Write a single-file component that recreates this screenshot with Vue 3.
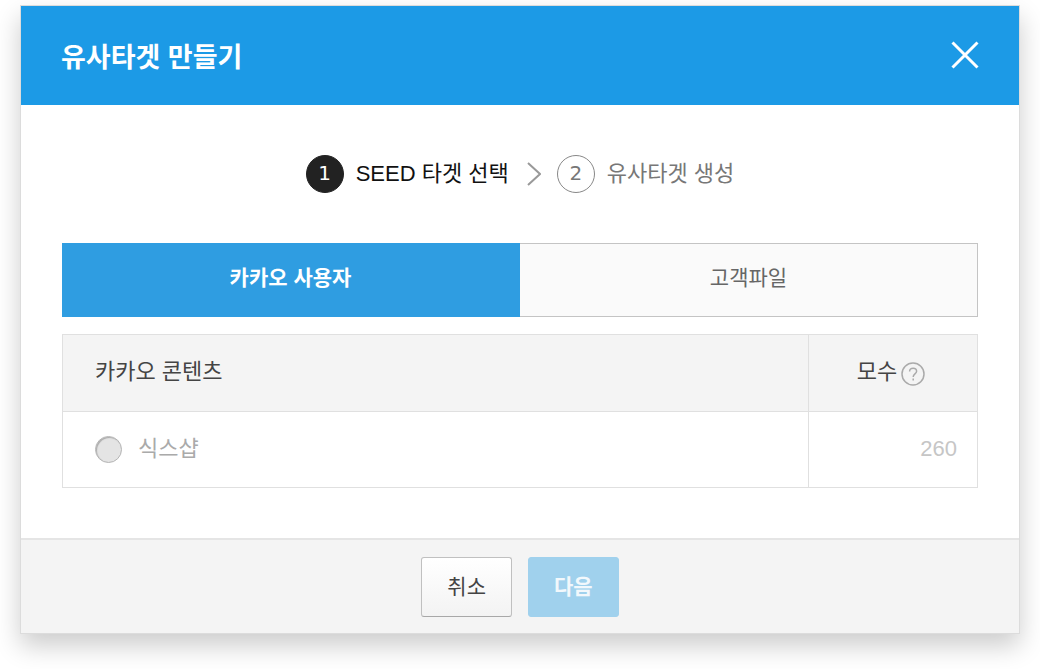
<script setup>
import { ref } from 'vue'

const steps = [
  { no: 1, label: 'SEED 타겟 선택' },
  { no: 2, label: '유사타겟 생성' },
]
const currentStep = ref(1)

const tabs = [
  { id: 'kakao', label: '카카오 사용자' },
  { id: 'file', label: '고객파일' },
]
const activeTab = ref('kakao')

const contents = [{ id: 'sixshop', name: '식스샵', count: 260, disabled: true }]
const selected = ref('')
</script>

<template>
  <section class="modal" role="dialog" aria-labelledby="modal-title">
    <header class="modal-header">
      <h1 id="modal-title" class="modal-title">유사타겟 만들기</h1>
      <button class="close" type="button" aria-label="닫기">
        <svg viewBox="0 0 28 28" width="28" height="28" aria-hidden="true">
          <path d="M1.5 1.5 26.5 26.5M26.5 1.5 1.5 26.5" />
        </svg>
      </button>
    </header>

    <div class="modal-body">
      <ol class="steps">
        <li
          v-for="(step, index) in steps"
          :key="step.no"
          class="step"
          :class="{ 'is-current': step.no === currentStep }"
        >
          <svg v-if="index > 0" class="step-arrow" viewBox="0 0 14 24" width="14" height="24" aria-hidden="true">
            <path d="M1 1 13 12 1 23" />
          </svg>
          <span class="step-no">{{ step.no }}</span>
          <span>{{ step.label }}</span>
        </li>
      </ol>

      <div class="tabs" role="tablist">
        <button
          v-for="tab in tabs"
          :key="tab.id"
          class="tab"
          :class="{ 'is-active': tab.id === activeTab }"
          type="button"
          role="tab"
          :aria-selected="String(tab.id === activeTab)"
          @click="activeTab = tab.id"
        >
          {{ tab.label }}
        </button>
      </div>

      <table class="targets">
        <thead>
          <tr>
            <th class="name" scope="col">카카오 콘텐츠</th>
            <th class="count" scope="col">
              <div class="count-head">
                <span>모수</span>
                <button class="help" type="button" aria-label="도움말">
                  <svg viewBox="0 0 24 24" width="24" height="24" aria-hidden="true">
                    <circle cx="12" cy="12" r="11" />
                    <path d="M8.6 9.6C8.6 7.4 10 6.2 12.1 6.2s3.5 1.2 3.5 3.1c0 2.6-3.4 2.7-3.4 5.6" />
                    <path d="M12.2 16.6v1.8" />
                  </svg>
                </button>
              </div>
            </th>
          </tr>
        </thead>
        <tbody>
          <tr v-for="item in contents" :key="item.id" :class="{ 'is-disabled': item.disabled }">
            <td class="name">
              <label class="choice">
                <input v-model="selected" type="radio" name="content" :value="item.id" :disabled="item.disabled" />
                <span>{{ item.name }}</span>
              </label>
            </td>
            <td class="count">{{ item.count }}</td>
          </tr>
        </tbody>
      </table>
    </div>

    <footer class="modal-footer">
      <button class="btn" type="button">취소</button>
      <button class="btn btn-primary" type="button" :disabled="!selected">다음</button>
    </footer>
  </section>
</template>

<style>
body {
  background: #fff;
}
</style>

<style scoped>
.modal {
  margin: 5px 20px 36px;
  border: 1px solid #dcdcdc;
  background: #fff;
  box-shadow: 0 12px 24px rgba(0, 0, 0, 0.2);
  font-family: 'Liberation Sans', 'Noto Sans CJK KR', sans-serif;
  font-size: 22px;
  line-height: 32px;
  color: #444;
}

button {
  font-family: inherit;
  cursor: pointer;
}

button:disabled {
  cursor: default;
}

.modal-header {
  display: flex;
  align-items: flex-start;
  justify-content: space-between;
  padding: 32px 40px 27px;
  background: #1c9ae6;
}

.modal-title {
  margin: 0;
  font-size: 27px;
  line-height: 40px;
  font-weight: 700;
  color: #fff;
}

.close {
  display: flex;
  margin-top: 3px;
  padding: 0;
  border: 0;
  background: none;
}

.close path {
  fill: none;
  stroke: #fff;
  stroke-width: 3;
}

.modal-body {
  padding: 50px 41px;
}

.steps {
  display: flex;
  justify-content: center;
  gap: 18px;
  margin: 0 0 50px;
  padding: 0;
  list-style: none;
}

.step {
  display: flex;
  align-items: center;
  gap: 12px;
  color: #777;
}

.step.is-current {
  color: #111;
}

.step-arrow {
  margin-right: 4px;
}

.step-arrow path {
  fill: none;
  stroke: #999;
  stroke-width: 2;
}

.step-no {
  box-sizing: border-box;
  width: 38px;
  height: 38px;
  border: 1px solid #888;
  border-radius: 50%;
  font-family: 'DejaVu Sans', sans-serif;
  font-size: 20px;
  line-height: 34px;
  text-align: center;
}

.is-current .step-no {
  border-color: #222;
  background: #222;
  color: #fff;
}

.tabs {
  display: flex;
  margin-bottom: 17px;
}

.tab {
  flex: 1;
  padding: 18px 0 22px;
  border: 1px solid #c4c4c4;
  border-left: 0;
  background: #fafafa;
  font-size: 21px;
  line-height: 32px;
  color: #666;
}

.tab.is-active {
  border-color: #2f9de1;
  background: #2f9de1;
  font-weight: 700;
  color: #fff;
}

.targets {
  width: 100%;
  border-collapse: collapse;
}

.targets th,
.targets td {
  border: 1px solid #e0e0e0;
  padding: 21px 20px 23px 32px;
  font-weight: 400;
  text-align: left;
}

.targets td {
  padding-bottom: 22px;
}

.targets .count {
  box-sizing: border-box;
  width: 169px;
  padding-left: 16px;
  text-align: right;
}

.targets th {
  background: #f4f4f4;
}

.count-head {
  display: flex;
  align-items: center;
  justify-content: center;
  gap: 4px;
}

.help {
  display: flex;
  padding: 4px 0 0;
  border: 0;
  background: none;
}

.help svg {
  fill: none;
  stroke: #aaa;
  stroke-width: 1.5;
}

.is-disabled {
  color: #aaa;
}

.is-disabled .count {
  color: #c6c6c6;
}

.choice {
  display: flex;
  align-items: center;
  gap: 16px;
}

.choice input {
  appearance: none;
  box-sizing: border-box;
  width: 27px;
  height: 27px;
  margin: 0;
  border: 1px solid #b4b4b4;
  border-radius: 50%;
  background: #fff;
}

.choice input:checked {
  border: 8px solid #1c9ae6;
}

.choice input:disabled {
  background: #e4e4e4;
  box-shadow: inset 1px 1px 1px #aaa;
}

.modal-footer {
  display: flex;
  justify-content: center;
  gap: 16px;
  padding: 17px 0 16px;
  border-top: 2px solid #e5e5e5;
  background: #f4f4f4;
}

.btn {
  padding: 13px 25px;
  border: 1px solid #c0c0c0;
  border-bottom-color: #a8a8a8;
  border-radius: 3px;
  background: linear-gradient(#fff, #f3f3f3);
  font-size: 21px;
  line-height: 32px;
  color: #444;
}

.btn-primary {
  border-color: #1c9ae6;
  background: #1c9ae6;
  font-weight: 700;
  color: #fff;
}

.btn-primary:disabled {
  border-color: #a0d1ed;
  background: #a0d1ed;
  color: #f2f8fc;
}
</style>
